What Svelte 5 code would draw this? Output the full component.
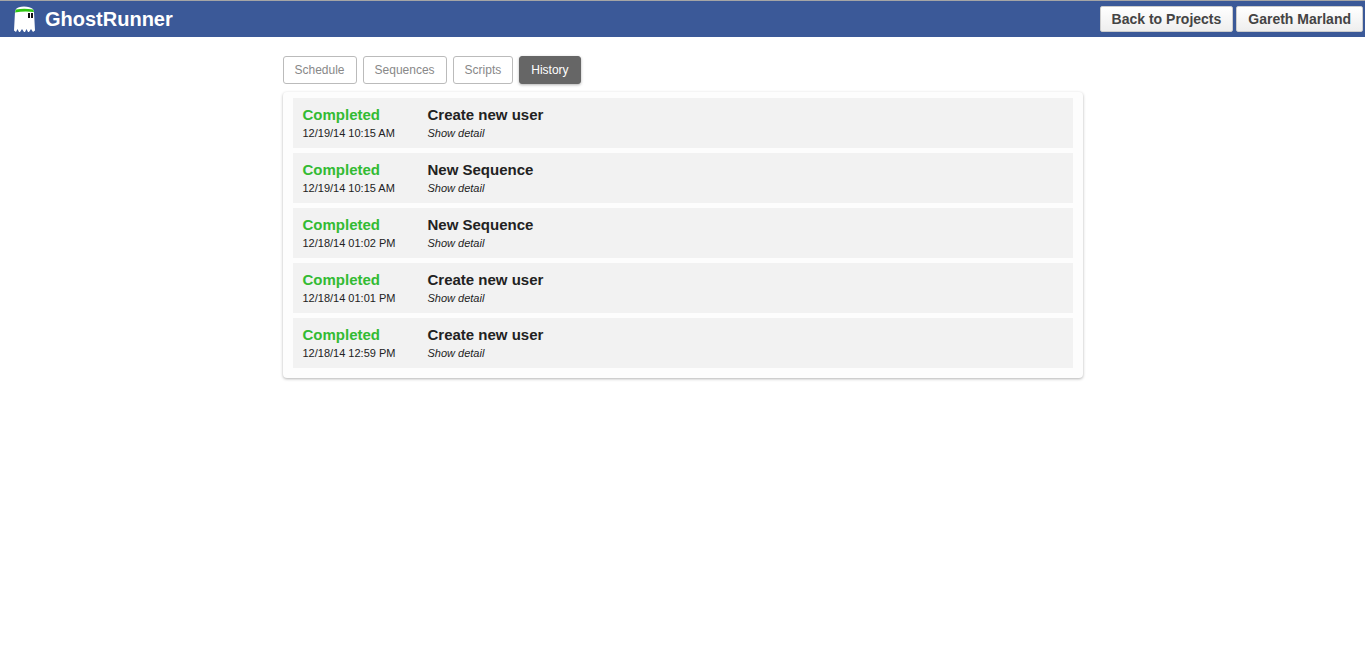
<script>
  const tabs = ['Schedule', 'Sequences', 'Scripts', 'History']

  const runs = [
    { status: 'Completed', date: '12/19/14 10:15 AM', name: 'Create new user' },
    { status: 'Completed', date: '12/19/14 10:15 AM', name: 'New Sequence' },
    { status: 'Completed', date: '12/18/14 01:02 PM', name: 'New Sequence' },
    { status: 'Completed', date: '12/18/14 01:01 PM', name: 'Create new user' },
    { status: 'Completed', date: '12/18/14 12:59 PM', name: 'Create new user' },
  ]

  let active = $state('History')
</script>

<header class="topbar">
  <a class="brand" href="#home">
    <svg class="logo" viewBox="0 0 22 26" width="22" height="26" aria-hidden="true">
      <path
        d="M2 3Q4 .5 10 .5T19 3L20 6L21 24.5L19 26L17 23L15 26H14L12.5 23L11 26H10L8 23L6 26H5L3.5 23L2 26L0 24.5L1 6Z"
        fill="#fff"
      />
      <path d="M2 3.4Q10 2 19 3.4L20 6Q10 5 1 6.4Z" fill="#2fc610" />
      <path d="M14 7h2v5h-2zM17 7h2v5h-2z" fill="#111" />
    </svg>
    <span>GhostRunner</span>
  </a>
  <nav class="account">
    <button type="button">Back to Projects</button>
    <button type="button">Gareth Marland</button>
  </nav>
</header>

<main class="page">
  <nav class="tabs">
    {#each tabs as tab}
      <button type="button" class:active={tab === active} onclick={() => (active = tab)}>{tab}</button>
    {/each}
  </nav>

  <section class="panel">
    {#each runs as run}
      <article class="run">
        <div>
          <div class="title status">{run.status}</div>
          <div class="meta">{run.date}</div>
        </div>
        <div>
          <div class="title">{run.name}</div>
          <a class="meta detail" href="#detail">Show detail</a>
        </div>
      </article>
    {/each}
  </section>
</main>

<style>
  :global(body) {
    background: #fff;
    color: #222;
    font-family: Arial, 'Liberation Sans', sans-serif;
  }

  button {
    font-family: inherit;
    cursor: pointer;
  }

  .topbar {
    display: flex;
    align-items: center;
    justify-content: space-between;
    box-sizing: border-box;
    height: 37px;
    padding: 0 2px 0 14px;
    border-top: 1px solid #a5a5a5;
    background: #3b5998;
  }

  .brand {
    display: flex;
    align-items: center;
    gap: 9px;
    color: #fff;
    font-size: 20px;
    font-weight: bold;
    line-height: 24px;
    text-decoration: none;
  }

  .account {
    display: flex;
    gap: 3px;
  }

  .account button {
    height: 26px;
    padding: 0 11px;
    border: 1px solid #ccc;
    border-radius: 2px;
    background: linear-gradient(#fff, #eee);
    color: #444;
    font-size: 14px;
    font-weight: bold;
  }

  .page {
    max-width: 800px;
    margin: 0 auto;
    padding: 19px 0;
  }

  .tabs {
    display: flex;
    gap: 6px;
    margin-bottom: 8px;
  }

  .tabs button {
    height: 28px;
    padding: 0 11px;
    border: 1px solid #bbb;
    border-radius: 3px;
    background: #fff;
    color: #888;
    font-size: 12px;
  }

  .tabs button.active {
    border-color: #666;
    background: #666;
    box-shadow: 0 1px 3px rgba(0, 0, 0, 0.3);
    color: #fff;
  }

  .panel {
    display: flex;
    flex-direction: column;
    gap: 5px;
    padding: 6px 10px 10px;
    border-radius: 4px;
    background: #fdfdfd;
    box-shadow: 0 1px 3px rgba(0, 0, 0, 0.3);
  }

  .run {
    display: grid;
    grid-template-columns: 125px 1fr;
    padding: 7px 10px;
    background: #f2f2f2;
  }

  .title {
    font-size: 15px;
    font-weight: bold;
    line-height: 20px;
  }

  .status {
    color: #3b3;
  }

  .meta {
    display: block;
    font-size: 11px;
    line-height: 16px;
  }

  .detail {
    color: inherit;
    font-style: italic;
    text-decoration: none;
  }
</style>
